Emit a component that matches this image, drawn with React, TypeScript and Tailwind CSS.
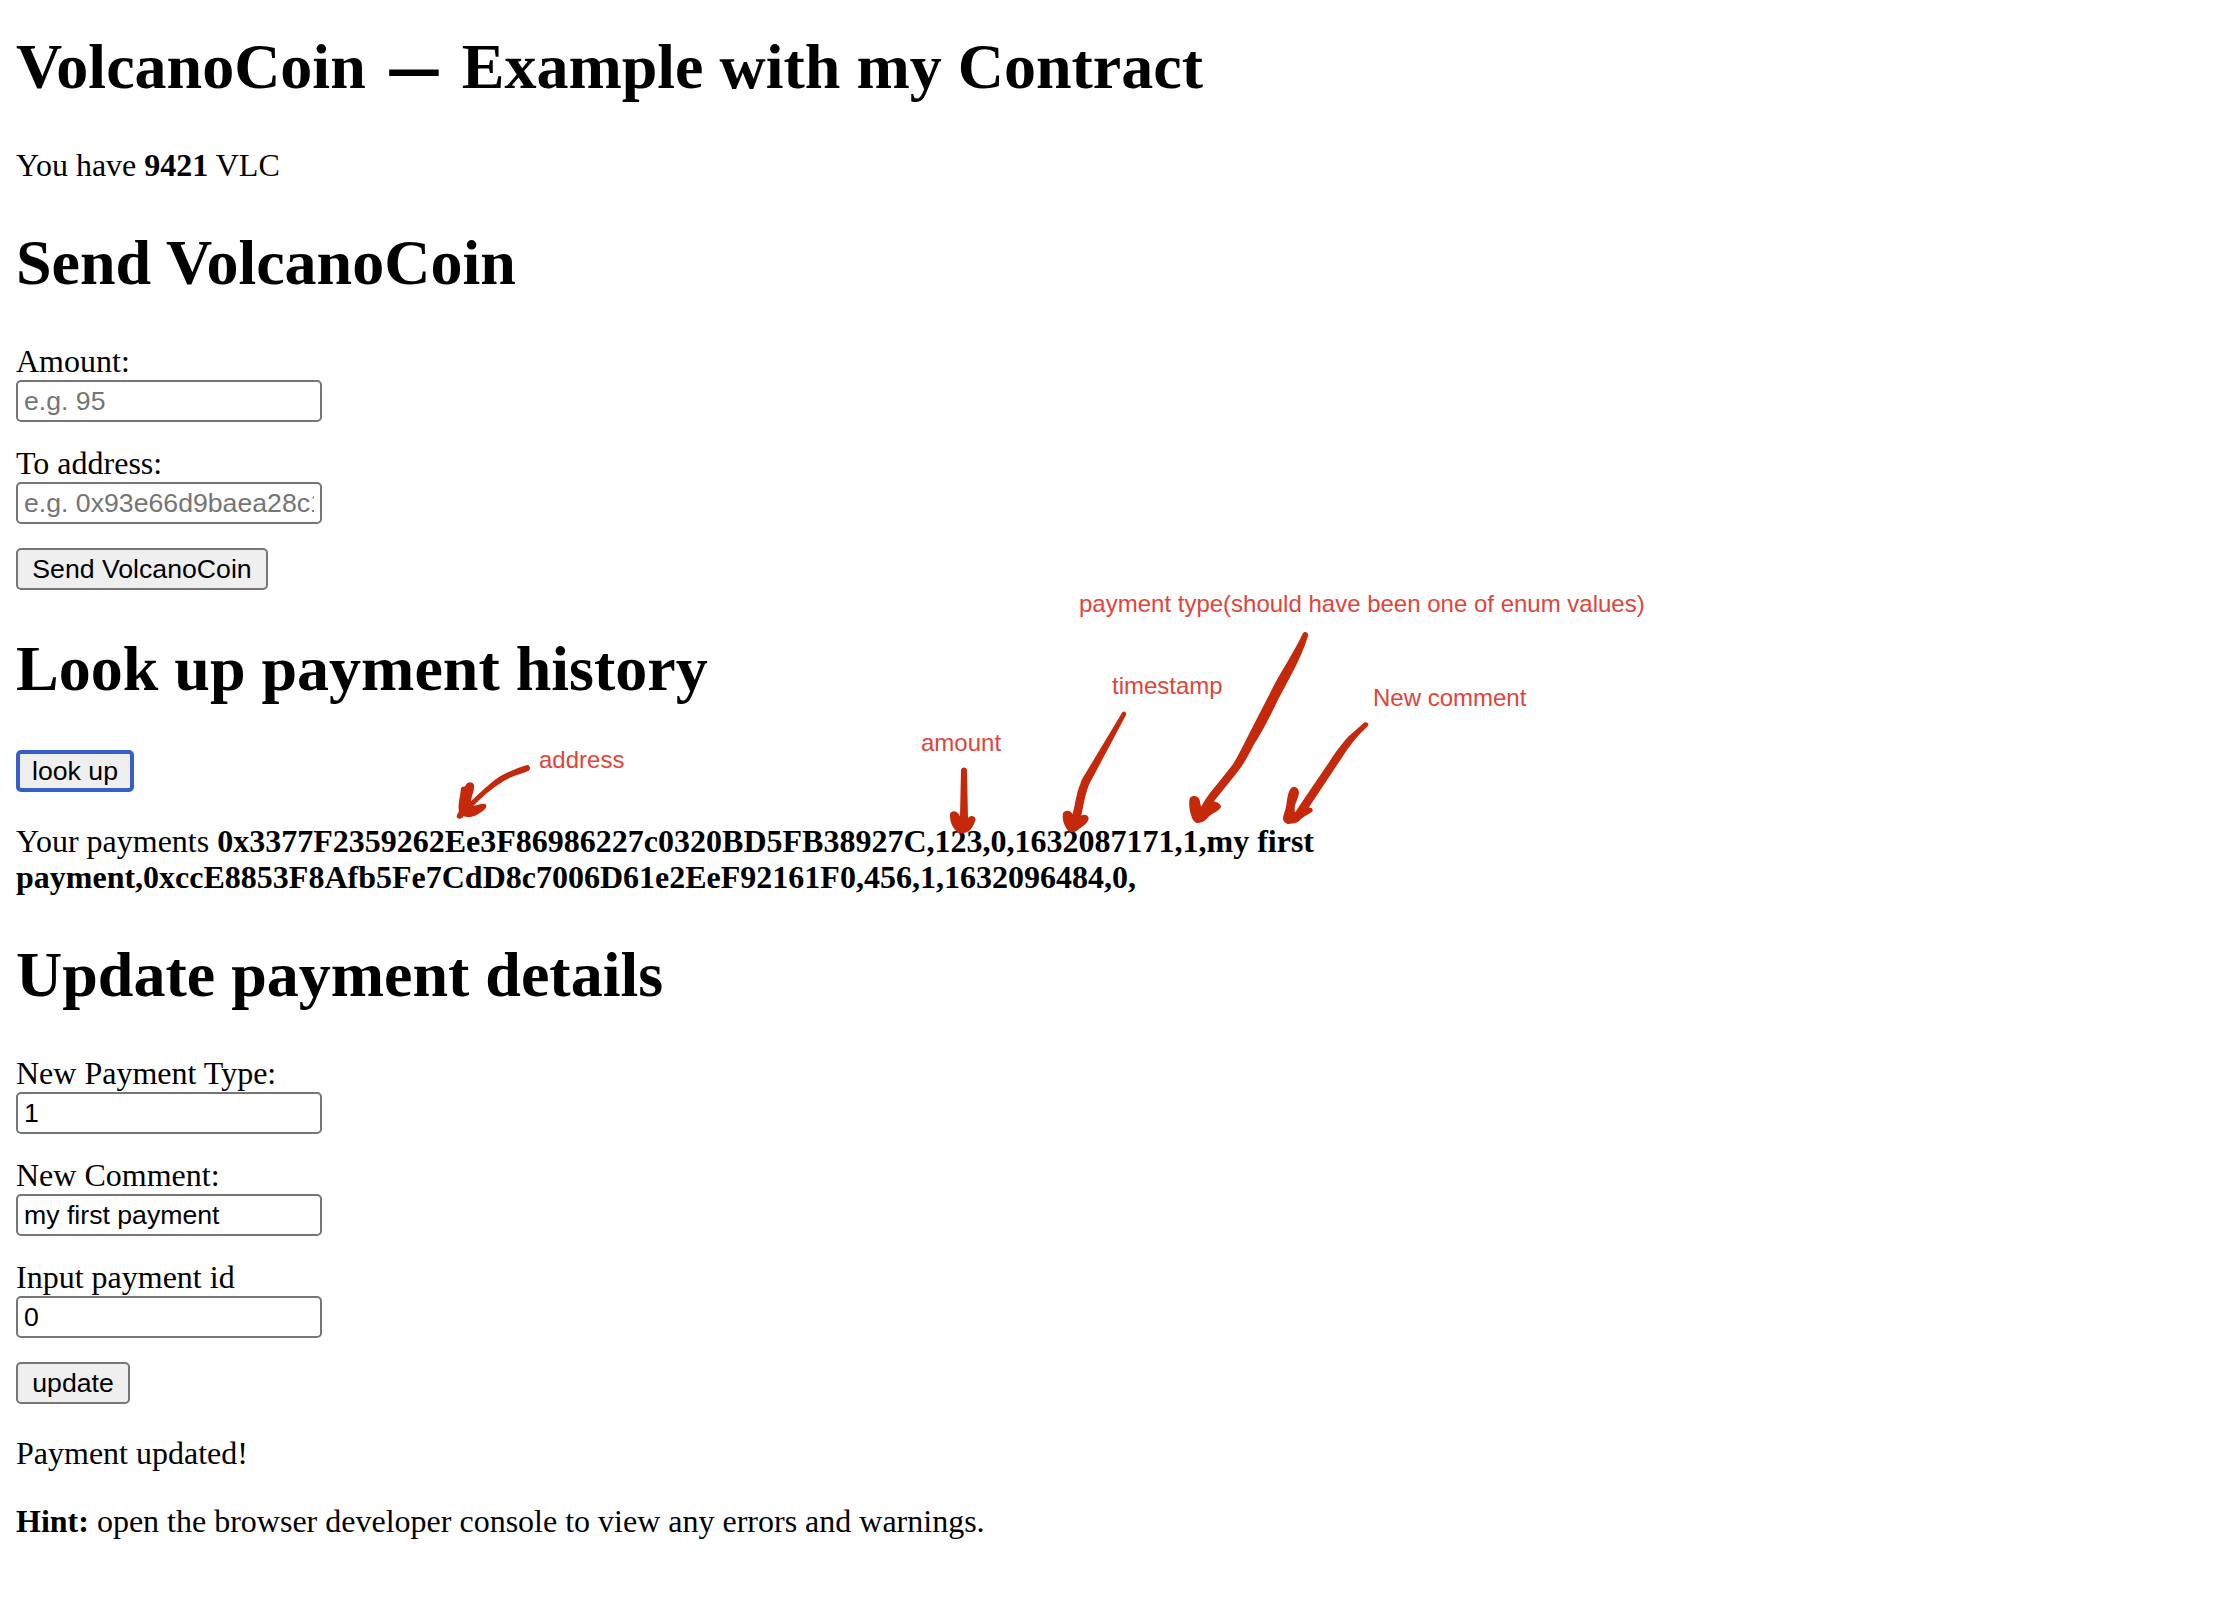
import type { ReactNode } from "react";

function Heading({ children, className = "" }: { children: ReactNode; className?: string }) {
  return <h1 className={`text-[64px] leading-[74px] font-bold ${className}`}>{children}</h1>;
}

function Field({ label, value, placeholder }: { label: string; value?: string; placeholder?: string }) {
  return (
    <label className="flex flex-col items-start gap-px">
      <span>{label}</span>
      <input
        className="h-[42px] w-[306px] rounded-[5px] border-2 border-[#767676] bg-white px-1.5 font-['Liberation_Sans',Arial,sans-serif] text-[26.67px] text-black placeholder:text-[#757575]"
        defaultValue={value}
        placeholder={placeholder}
      />
    </label>
  );
}

function Button({ children, className }: { children: ReactNode; className: string }) {
  return (
    <button
      className={`flex h-[42px] items-center justify-center rounded-[5px] bg-[#efefef] font-['Liberation_Sans',Arial,sans-serif] text-[26.67px] leading-[30px] whitespace-nowrap ${className}`}
    >
      {children}
    </button>
  );
}

function Note({ children, className }: { children: ReactNode; className: string }) {
  return (
    <span
      className={`absolute font-['Liberation_Sans',Arial,sans-serif] text-[24px] leading-[28px] whitespace-nowrap text-[#e0443a] ${className}`}
    >
      {children}
    </span>
  );
}

function Arrows() {
  return (
    <svg className="absolute top-0 left-0 h-[1624px] w-[2226px]" viewBox="0 0 2226 1624" fill="#c5290c">
      <g transform="translate(440 740) scale(0.33333)">
        <path d="M262 75 C270 75 273 86 266 92 C250 100 215 107 190 124 C155 145 125 173 100 197 C118 195 130 188 137 193 C143 200 136 210 115 222 C100 232 82 233 70 229 C67 238 54 239 50 230 C50 223 56 218 57 213 C52 195 62 165 63 145 C64 140 72 140 76 138 C80 125 96 122 102 134 C104 150 94 170 93 184 C120 158 150 128 178 110 C205 95 232 84 262 75 Z" />
      </g>
      <g transform="translate(900 720) scale(0.33333)">
        <path d="M183 150 C184 140 200 140 201 150 L204 294 C210 285 224 286 227 297 C222 318 210 334 199 337 C190 342 178 342 172 335 C155 322 149 302 150 281 C155 270 172 270 180 289 Z" />
      </g>
      <g transform="translate(1040 580) scale(0.33333)">
        <path d="M246 398 C252 391 260 396 258 405 L148 612 C136 640 132 670 124 707 C134 701 146 707 146 716 C143 730 127 740 110 752 C98 760 86 757 80 746 C70 732 66 716 69 700 C74 688 92 690 98 702 C106 670 110 635 121 612 C124 600 129 592 135 583 Z" />
        <path d="M788 161 C793 152 806 156 804 168 C793 205 775 245 752 288 L714 359 C688 415 663 460 641 495 C624 530 605 562 583 588 L522 664 C530 667 543 671 543 681 C537 693 518 700 508 708 C498 720 488 728 475 729 C463 729 456 717 453 704 C447 688 446 664 450 653 C459 643 476 648 479 660 L483 680 C500 650 520 625 540 602 L580 551 C602 515 622 470 644 429 L707 306 C738 250 765 210 788 161 Z" />
        <path d="M970 430 C978 422 990 431 983 439 C955 465 935 490 915 519 L806 683 C814 682 819 686 818 694 C808 703 792 708 778 722 C769 731 755 729 747 732 C736 732 728 722 729 712 C731 700 738 688 739 674 C742 655 744 632 756 622 C769 618 777 627 777 639 C774 660 760 675 765 697 C774 685 781 674 788 663 L863 553 C880 526 897 502 914 482 C930 463 950 449 970 430 Z" />
      </g>
    </svg>
  );
}

export default function App() {
  return (
    <main className="relative h-[1624px] w-[2226px] overflow-hidden bg-white px-4 pt-[30px] font-['Liberation_Serif','Times_New_Roman',serif] text-[32px] leading-9 text-black">
      <Heading>
        VolcanoCoin <span className="inline-block scale-x-[0.74] [-webkit-text-stroke:2px_black]">—</span> Example with
        my Contract
      </Heading>
      <p className="mt-[43px]">
        You have <strong>9421</strong> VLC
      </p>

      <Heading className="mt-[43px]">Send VolcanoCoin</Heading>
      <div className="mt-[43px] flex flex-col items-start gap-[23px]">
        <Field label="Amount:" placeholder="e.g. 95" />
        <Field label="To address:" placeholder="e.g. 0x93e66d9baea28c17d9fc393b53e3fbdd76899dae" />
      </div>
      <Button className="mt-6 w-[252px] border-2 border-[#767676]">Send VolcanoCoin</Button>

      <Heading className="mt-[42px]">Look up payment history</Heading>
      <Button className="mt-[44px] w-[118px] border-4 border-[#355fcb]">look up</Button>
      <p className="mt-[31px] w-[1310px]">
        Your payments{" "}
        <strong>
          0x3377F2359262Ee3F86986227c0320BD5FB38927C,123,0,1632087171,1,my first
          <br />
          payment,0xccE8853F8Afb5Fe7CdD8c7006D61e2EeF92161F0,456,1,1632096484,0,
        </strong>
      </p>

      <Heading className="mt-[43px]">Update payment details</Heading>
      <div className="mt-[43px] flex flex-col items-start gap-[23px]">
        <Field label="New Payment Type:" value="1" />
        <Field label="New Comment:" value="my first payment" />
        <Field label="Input payment id" value="0" />
      </div>
      <Button className="mt-6 w-[114px] border-2 border-[#767676]">update</Button>
      <p className="mt-[31px]">Payment updated!</p>
      <p className="mt-8">
        <strong>Hint:</strong> open the browser developer console to view any errors and warnings.
      </p>

      <Arrows />
      <Note className="top-[746px] left-[539px]">address</Note>
      <Note className="top-[729px] left-[921px]">amount</Note>
      <Note className="top-[672px] left-[1112px]">timestamp</Note>
      <Note className="top-[590px] left-[1079px]">payment type(should have been one of enum values)</Note>
      <Note className="top-[684px] left-[1373px]">New comment</Note>
    </main>
  );
}
